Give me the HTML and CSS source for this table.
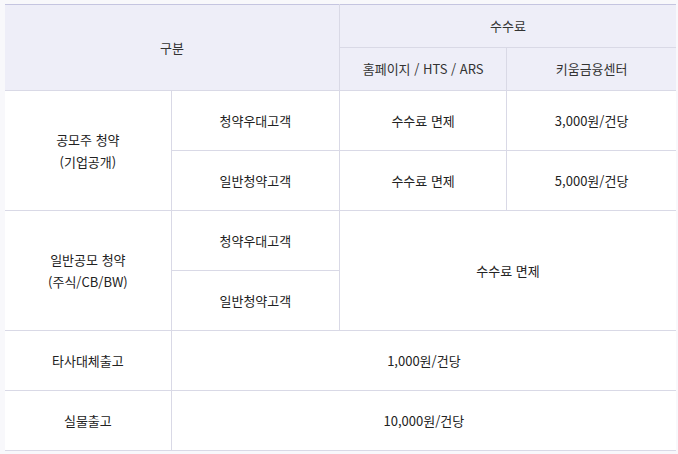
FILE: index.html
```html
<!DOCTYPE html>
<html lang="ko">
<head>
<meta charset="utf-8">
<link rel="stylesheet" href="styles.css">
</head>
<body>
<div class="wrap">
<table class="fee">
  <colgroup>
    <col class="c1"><col class="c2"><col class="c3"><col class="c4">
  </colgroup>
  <thead>
    <tr class="hr">
      <th colspan="2" rowspan="2">구분</th>
      <th colspan="2">수수료</th>
    </tr>
    <tr class="hr">
      <th>홈페이지 / HTS / ARS</th>
      <th>키움금융센터</th>
    </tr>
  </thead>
  <tbody>
    <tr>
      <td rowspan="2">공모주 청약<br>(기업공개)</td>
      <td>청약우대고객</td>
      <td>수수료 면제</td>
      <td>3,000원/건당</td>
    </tr>
    <tr>
      <td>일반청약고객</td>
      <td>수수료 면제</td>
      <td>5,000원/건당</td>
    </tr>
    <tr>
      <td rowspan="2">일반공모 청약<br>(주식/CB/BW)</td>
      <td>청약우대고객</td>
      <td rowspan="2" colspan="2">수수료 면제</td>
    </tr>
    <tr>
      <td>일반청약고객</td>
    </tr>
    <tr>
      <td>타사대체출고</td>
      <td colspan="3">1,000원/건당</td>
    </tr>
    <tr>
      <td>실물출고</td>
      <td colspan="3">10,000원/건당</td>
    </tr>
  </tbody>
</table>
</div>
</body>
</html>
```
FILE: styles.css
```css
html, body {
  margin: 0;
  padding: 0;
  background: #f8f8fb;
}
.wrap {
  padding: 4px 0 0 5px;
}
.fee {
  width: 671px;
  border-collapse: collapse;
  table-layout: fixed;
  font-family: "Noto Sans CJK KR", "Noto Sans", sans-serif;
  font-size: 13px;
  color: #222;
  background: #fff;
  border-top: 1px solid #c5c5e0;
}
.c1 { width: 166px; }
.c2 { width: 168px; }
.c3 { width: 167px; }
.c4 { width: 169px; }
.fee th, .fee td {
  border: 1px solid #d9d9e6;
  text-align: center;
  vertical-align: middle;
  padding: 0;
  font-weight: normal;
  line-height: 22px;
}
.fee th {
  background: #eeeef8;
  height: 42px;
  color: #333;
}
.fee td {
  height: 59px;
}
.fee tr > *:first-child { border-left: 0; }
.fee tr > *:last-child { border-right: 0; }
.fee thead tr:first-child th { border-top: 1px solid #c5c5e0; }
```
